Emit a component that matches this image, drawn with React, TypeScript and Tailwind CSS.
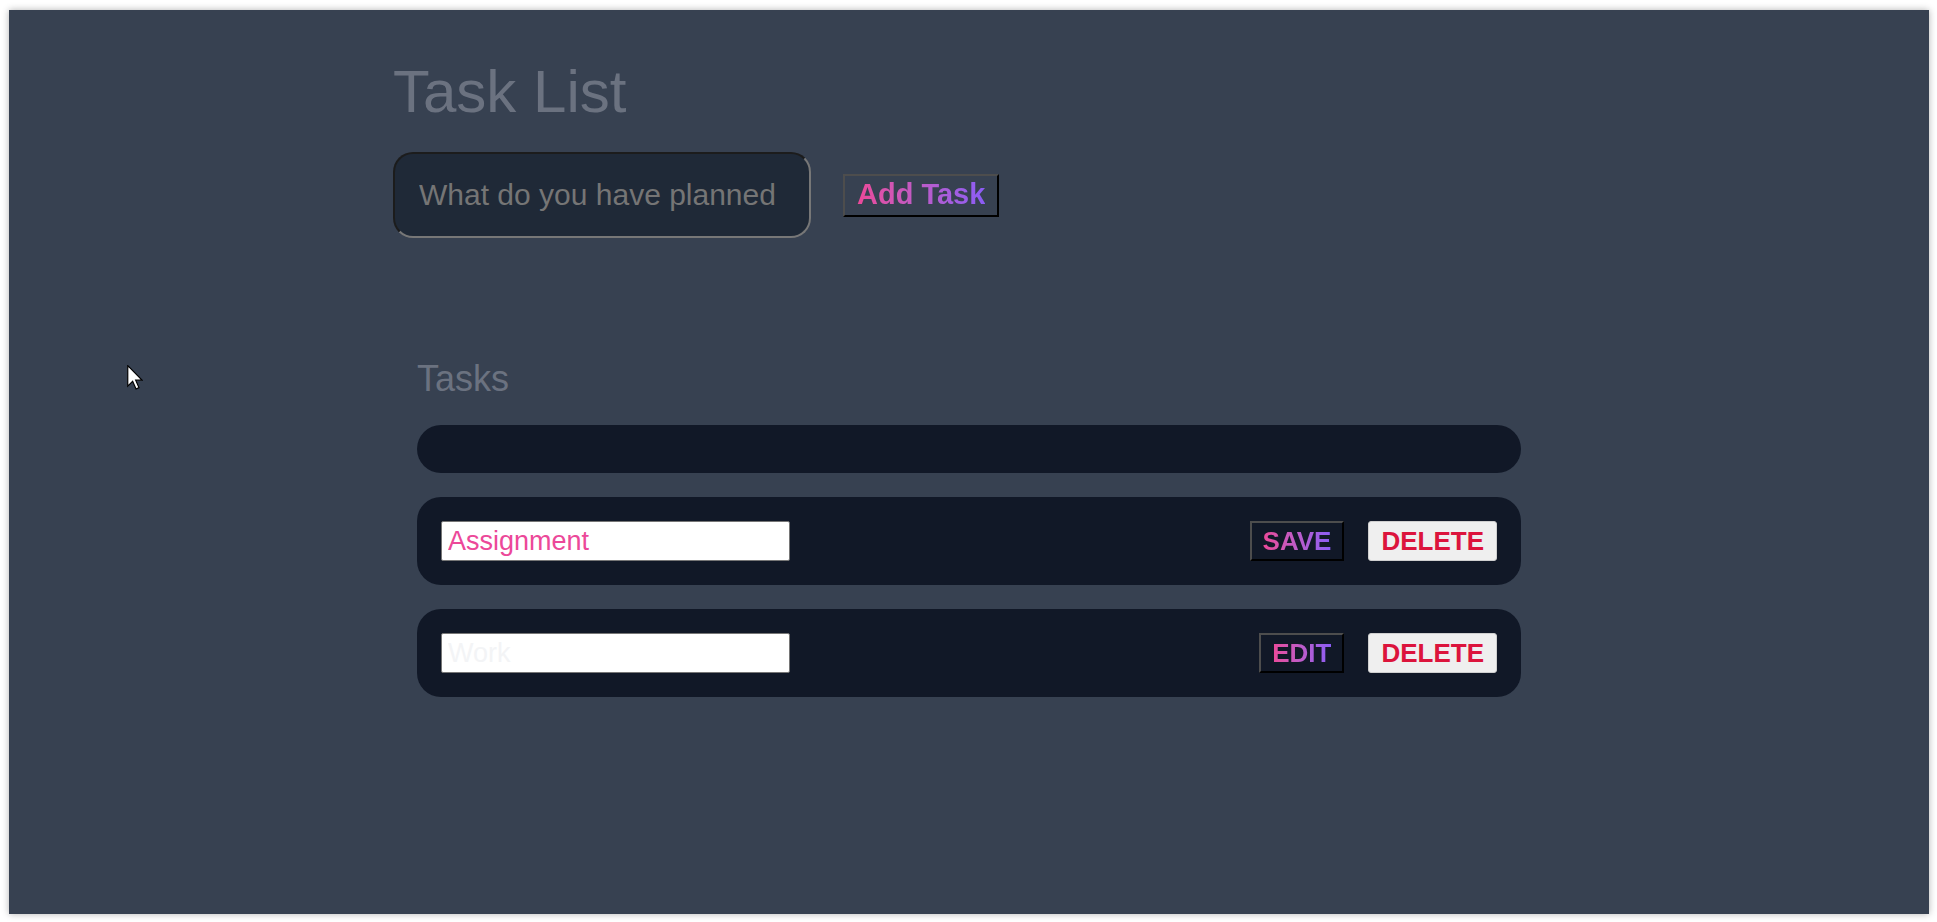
import { useState } from "react";

type Task = {
  id: number;
  text: string;
  editing: boolean;
};

const initialTasks: Task[] = [
  { id: 1, text: "Assignment", editing: true },
  { id: 2, text: "Work", editing: false },
];

function GradientLabel({ children }: { children: string }) {
  return (
    <span className="bg-linear-to-r from-[#ec4899] to-[#8b5cf6] bg-clip-text text-transparent">
      {children}
    </span>
  );
}

export default function App() {
  const [tasks] = useState<Task[]>(initialTasks);

  return (
    <div
      className="min-h-screen bg-white pl-[9px] pt-[10px]"
      style={{ fontFamily: '"Liberation Sans", Arial, sans-serif' }}
    >
      <div className="relative h-[904px] w-[1920px] bg-[#374151] shadow-[0_0_7px_rgba(0,0,0,0.3)]">
        {/* mouse pointer from the capture */}
        <svg
          className="absolute left-[118px] top-[355px]"
          width="16"
          height="25"
          viewBox="0 0 12 19"
        >
          <path
            d="M0.5 0.5 L0.5 16 L4.2 12.4 L6.8 18.2 L9 17.2 L6.5 11.5 L11.3 11.5 Z"
            fill="#fff"
            stroke="#000"
            strokeWidth="0.9"
            strokeLinejoin="miter"
          />
        </svg>

        <div className="mx-auto max-w-6xl pt-[52px]">
          <h1 className="text-6xl leading-none text-[#6b7280]">Task List</h1>

          {/* New task form */}
          <div className="mt-[30px] flex items-center gap-8">
            <input
              placeholder="What do you have planned"
              className="h-[86px] w-[418px] rounded-[20px] border-2 border-t-[#1c1c1c] border-l-[#1c1c1c] border-r-[#777] border-b-[#777] bg-[#1f2937] px-6 text-3xl text-gray-200 outline-none placeholder:text-[#757575]"
            />
            <button className="flex h-[43px] items-center border-2 border-t-[#4d4d4d] border-l-[#4d4d4d] border-r-black border-b-black bg-transparent px-[12px] text-[29px] font-bold">
              <GradientLabel>Add Task</GradientLabel>
            </button>
          </div>

          {/* Task list */}
          <section className="mt-[97px] p-6">
            <h2 className="text-4xl leading-[40px] text-[#6b7280]">Tasks</h2>

            <ul className="mt-[26px] flex flex-col gap-6">
              <li className="rounded-3xl bg-[#111827] p-6" />

              {tasks.map((task) => (
                <li
                  key={task.id}
                  className="flex items-center justify-between rounded-3xl bg-[#111827] p-6"
                >
                  <input
                    defaultValue={task.text}
                    className={
                      task.editing
                        ? "h-[40px] w-[349px] rounded-[2px] border border-[#767676] bg-white px-[6px] text-[27px] text-[#ec4899] outline-none"
                        : "h-[40px] w-[349px] rounded-[2px] border border-[#767676] bg-white px-[6px] text-[27px] text-[#f3f4f6] outline-none"
                    }
                  />
                  <div className="flex items-center gap-6">
                    <button className="flex h-[40px] items-center border-2 border-t-[#4d4d4d] border-l-[#4d4d4d] border-r-black border-b-black bg-transparent px-[11px] text-[26px] font-bold">
                      <GradientLabel>{task.editing ? "SAVE" : "EDIT"}</GradientLabel>
                    </button>
                    <button className="flex h-[40px] items-center rounded-[3px] border border-[#cfcfcf] bg-[#efefef] px-[12px] text-[26px] font-bold text-[#dc143c]">
                      DELETE
                    </button>
                  </div>
                </li>
              ))}
            </ul>
          </section>
        </div>
      </div>
    </div>
  );
}
